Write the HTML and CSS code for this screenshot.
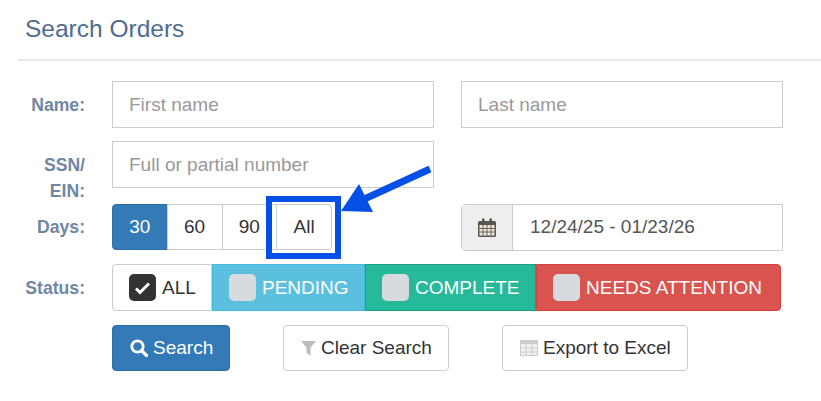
FILE: index.html
```html
<!DOCTYPE html>
<html lang="en">
<head>
    <meta charset="UTF-8">
    <title>Search Orders</title>
    <link rel="stylesheet" href="styles.css">
</head>
<body>

    <h4 class="title">Search Orders</h4>

    <form class="search-form">
        <!-- Name -->
        <div class="row">
            <label class="row-label">Name:</label>
            <div class="form-control">First name</div>
            <div class="form-control">Last name</div>
        </div>

        <!-- SSN -->
        <div class="row row-ssn">
            <label class="row-label">SSN/<br>EIN:</label>
            <div class="form-control">Full or partial number</div>
        </div>

        <!-- Days -->
        <div class="row row-days">
            <label class="row-label">Days:</label>
            <div class="days-group">
                <div class="day-btn active">30</div>
                <div class="day-btn">60</div>
                <div class="day-btn">90</div>
                <div class="day-btn">All</div>
            </div>
            <div class="date-range">
                <span class="date-addon">
                    <svg width="18" height="19" viewBox="0 0 18 19">
                        <path fill="#5b5550" d="M1.500 3H4V1.600a1.300 1.300 0 0 1 2.600 0V3h4.800V1.600a1.300 1.300 0 0 1 2.600 0V3h2.500A1.500 1.500 0 0 1 18 4.500v13a1.500 1.500 0 0 1-1.500 1.500h-15A1.500 1.500 0 0 1 0 17.500v-13A1.500 1.500 0 0 1 1.500 3z"/>
                        <path fill="#efe9e0" d="M1.500 7h15v10.500h-15z"/>
                        <path stroke="#6b625a" fill="none" d="M5 7v10.500M9 7v10.500M13 7v10.500M1.500 10.500h15M1.500 14h15"/>
                    </svg>
                </span>
                <span class="date-value">12/24/25 - 01/23/26</span>
            </div>
        </div>

        <!-- Status -->
        <div class="row row-status">
            <label class="row-label">Status:</label>
            <div class="status-group">
                <div class="status-btn status-all">
                    <span class="check checked">
                        <svg width="17" height="14" viewBox="0 0 17 14"><path d="M2 7.500l4 4L15 2.500" fill="none" stroke="#fff" stroke-width="3"/></svg>
                    </span>ALL
                </div>
                <div class="status-btn status-pending"><span class="check"></span>PENDING</div>
                <div class="status-btn status-complete"><span class="check"></span>COMPLETE</div>
                <div class="status-btn status-attention"><span class="check"></span>NEEDS ATTENTION</div>
            </div>
        </div>

        <!-- Buttons -->
        <div class="row row-actions">
            <div class="btn btn-primary">
                <svg width="18" height="18" viewBox="0 0 18 18"><circle cx="7.500" cy="7.500" r="5.700" fill="none" stroke="#fff" stroke-width="2.800"/><path d="M11.500 11.500l5 5" stroke="#fff" stroke-width="3.200" stroke-linecap="round"/></svg>
                Search
            </div>
            <div class="btn btn-clear">
                <svg width="15" height="16" viewBox="0 0 15 16"><path fill="#bbb" d="M0 1h15L9.500 7.500V16L5.500 12.500v-5z"/></svg>
                Clear Search
            </div>
            <div class="btn btn-export">
                <svg width="18" height="16" viewBox="0 0 18 16"><path fill="#f1f1f1" d="M0 0h18v16H0z"/><path fill="#ccc" d="M0 0h18v4H0z"/><path stroke="#ccc" fill="none" d="M.5 4v12M6 4v12M12 4v12M17.500 4v12M0 8h18M0 12h18M0 15.500h18"/></svg>
                Export to Excel
            </div>
        </div>
    </form>

    <!-- Annotation over the All button -->
    <div class="callout-box"></div>
    <svg class="callout-arrow" width="100" height="60" viewBox="0 0 100 60">
        <path d="M90 9L20 41" stroke="#0450e6" stroke-width="7" fill="none"/>
        <path fill="#0450e6" d="M1 51L19 24L33 52z"/>
    </svg>

</body>
</html>
```

FILE: styles.css
```css
/* General Styling */
* {
    box-sizing: border-box;
}

body {
    margin: 0;
    height: 401px;
    overflow: hidden;
    position: relative;
    background: #fff;
    font-family: "Liberation Sans", Arial, sans-serif;
    font-size: 19px;
    color: #333;
}

.title {
    margin: 0 0 0 18px;
    height: 61px;
    padding: 15px 0 0 7px;
    font-size: 24.500px;
    line-height: 28px;
    font-weight: normal;
    color: #4f6d8f;
    border-bottom: 2px solid #e7eaec;
}

.search-form {
    padding-top: 20px;
}

/* Rows */
.row {
    display: flex;
    align-items: center;
    height: 47px;
    margin-bottom: 13px;
}

.row-ssn {
    margin-bottom: 16px;
}

.row-days {
    height: 46px;
    margin-bottom: 14px;
}

.row-status {
    margin-bottom: 14px;
}

.row-actions {
    height: 46px;
    margin-bottom: 0;
}

.row-label {
    width: 85px;
    margin-right: 27px;
    text-align: right;
    font-size: 17.600px;
    font-weight: bold;
    line-height: 26px;
    color: #6f87a3;
}

.row-ssn .row-label {
    align-self: flex-start;
    padding-top: 11px;
}

/* Inputs */
.form-control {
    width: 322px;
    height: 47px;
    margin-right: 27px;
    padding-left: 16px;
    border: 1.500px solid #ccc;
    line-height: 46px;
    color: #999;
}

/* Days */
.days-group {
    display: flex;
    width: 322px;
    margin-right: 27px;
}

.day-btn {
    width: 55.750px;
    height: 46px;
    margin-right: -1px;
    border: 1px solid #ccc;
    text-align: center;
    line-height: 44px;
    background: #fff;
}

.day-btn:first-child {
    border-radius: 4px 0 0 4px;
}

.day-btn:last-child {
    border-radius: 0 4px 4px 0;
}

.day-btn.active {
    background: #337ab7;
    border-color: #2e6da4;
    color: #fff;
}

.date-range {
    display: flex;
    width: 322px;
    height: 47px;
    border: 1.500px solid #ccc;
    border-radius: 4px 0 0 4px;
    color: #555;
}

.date-addon {
    display: flex;
    align-items: center;
    justify-content: center;
    width: 51px;
    background: #eee;
    border-right: 1px solid #ccc;
}

.date-value {
    padding-left: 17px;
    line-height: 44px;
}

/* Status */
.status-group {
    display: flex;
    height: 47px;
}

.status-btn {
    display: flex;
    align-items: center;
    padding-left: 16px;
    color: #fff;
    white-space: nowrap;
    border: 1px solid transparent;
}

.check {
    display: flex;
    flex-shrink: 0;
    align-items: center;
    justify-content: center;
    width: 27px;
    height: 27px;
    margin-right: 6px;
    border-radius: 5px;
    background: #d7dbde;
}

.check.checked {
    background: #333;
}

.status-all {
    width: 100px;
    color: #333;
    border-color: #ccc;
    border-radius: 4px 0 0 4px;
}

.status-pending {
    width: 153px;
    background: #5bc0de;
    border-color: #46b8da;
}

.status-complete {
    width: 171px;
    background: #26b99a;
    border-color: #169f85;
}

.status-attention {
    width: 245px;
    background: #d9534f;
    border-color: #d43f3a;
    border-radius: 0 4px 4px 0;
}

/* Action buttons */
.btn {
    display: flex;
    align-items: center;
    gap: 5px;
    height: 46px;
    border: 1px solid #ccc;
    border-radius: 4px;
}

.btn-primary {
    width: 118px;
    margin-left: 112px;
    padding-left: 17px;
    background: #337ab7;
    border-color: #2e6da4;
    color: #fff;
}

.btn-clear {
    width: 166px;
    margin-left: 53px;
    padding-left: 17px;
}

.btn-export {
    width: 186px;
    margin-left: 53px;
    padding-left: 17px;
}

/* Annotation */
.callout-box {
    position: absolute;
    left: 266px;
    top: 196px;
    width: 75px;
    height: 63px;
    border: 6px solid #0450e6;
}

.callout-arrow {
    position: absolute;
    left: 340px;
    top: 160px;
}
```
